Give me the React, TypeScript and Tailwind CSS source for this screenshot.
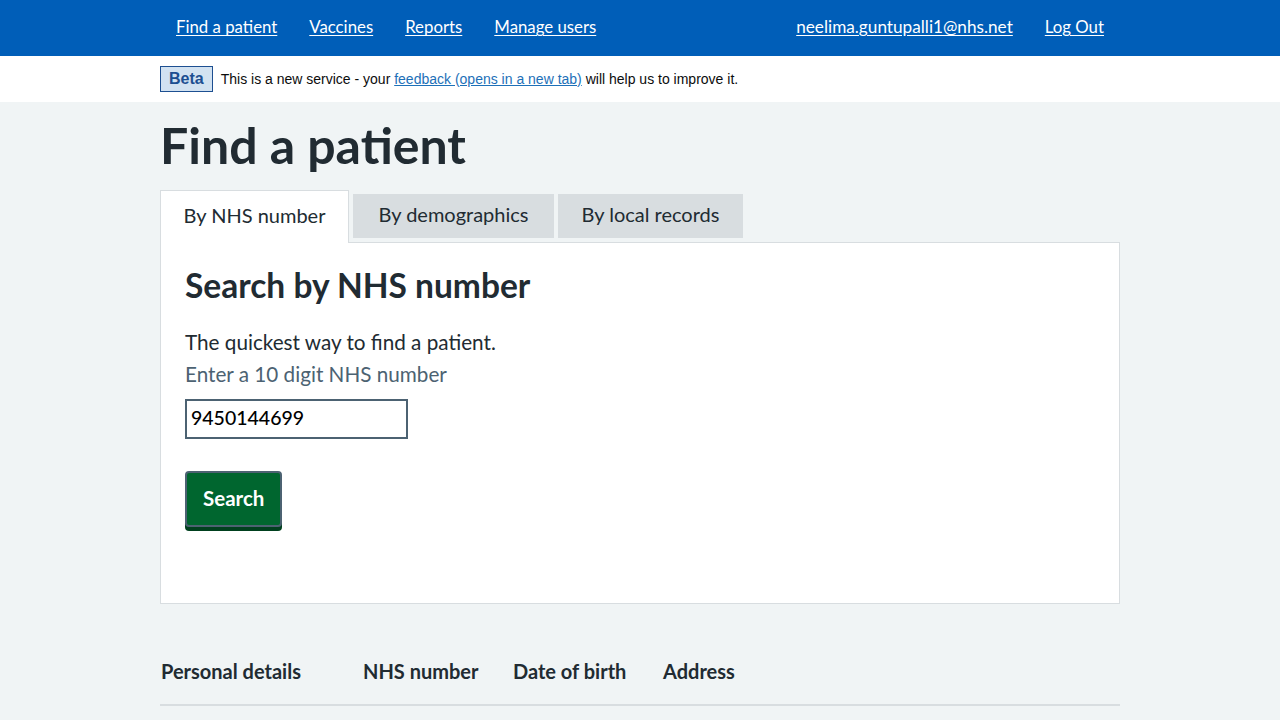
import { useState } from "react";

const NAV_LEFT = ["Find a patient", "Vaccines", "Reports", "Manage users"];

const TABS = [
  { label: "By NHS number", width: "w-[189px]" },
  { label: "By demographics", width: "w-[201px]" },
  { label: "By local records", width: "w-[185px]" },
];

export default function App() {
  const [tab, setTab] = useState(0);
  const [nhsNumber, setNhsNumber] = useState("9450144699");

  return (
    <div className="min-h-screen bg-[#f0f4f5] text-[#212b32] font-['Lato','Open_Sans',sans-serif]">
      {/* header */}
      <header className="bg-[#005eb8] text-white">
        <nav className="mx-auto flex h-14 w-[960px] items-center justify-between pb-[2px]">
          <ul className="flex">
            {NAV_LEFT.map((item) => (
              <li key={item}>
                <a href="#" className="block px-4 text-[16.8px] underline underline-offset-2">
                  {item}
                </a>
              </li>
            ))}
          </ul>
          <ul className="flex">
            <li>
              <a href="#" className="block px-4 text-[17.2px] underline underline-offset-2">
                neelima.guntupalli1@nhs.net
              </a>
            </li>
            <li>
              <a href="#" className="block px-4 text-[16.8px] underline underline-offset-2">
                Log Out
              </a>
            </li>
          </ul>
        </nav>
      </header>

      {/* beta banner */}
      <div className="bg-white">
        <div className="mx-auto flex h-[46px] w-[960px] items-center gap-2 font-['Liberation_Sans',Arial,sans-serif] text-[14px] text-[#0b0c0c]">
          <strong className="border border-[#1d4f91] bg-[#d2e2f1] px-2 py-[2px] text-[16px] leading-5 text-[#1d4f91]">
            Beta
          </strong>
          <span>
            This is a new service - your{" "}
            <a href="#" className="text-[#1d70b8] underline">
              feedback (opens in a new tab)
            </a>{" "}
            will help us to improve it.
          </span>
        </div>
      </div>

      <main className="mx-auto w-[960px]">
        <h1 className="mt-[13px] mb-[15px] text-[50px] font-bold leading-[60px]">Find a patient</h1>

        {/* tabs */}
        <div className="flex items-end gap-1">
          {TABS.map((t, i) =>
            i === tab ? (
              <button
                key={t.label}
                onClick={() => setTab(i)}
                className={`${t.width} relative -mb-px h-[53px] border border-b-0 border-[#d8dde0] bg-white pb-[5px] text-[20px]`}
              >
                {t.label}
              </button>
            ) : (
              <button
                key={t.label}
                onClick={() => setTab(i)}
                className={`${t.width} mb-[4px] h-[44px] bg-[#d8dde0] pb-[4px] text-[20px]`}
              >
                {t.label}
              </button>
            )
          )}
        </div>

        <section className="h-[362px] border border-[#d8dde0] bg-white px-6 pt-[22px]">
          <h2 className="text-[33.5px] font-bold leading-10">Search by NHS number</h2>
          <p className="mt-[23px] text-[20.7px] leading-7">The quickest way to find a patient.</p>
          <label className="mt-[4px] block text-[20.7px] leading-7 text-[#4c6272]">
            Enter a 10 digit NHS number
          </label>
          <input
            value={nhsNumber}
            onChange={(e) => setNhsNumber(e.target.value)}
            className="mt-[11px] block h-10 w-[223px] border-2 border-[#4c6272] px-1 pb-[3px] text-[19.5px] font-medium text-black outline-none"
          />
          <button className="mt-8 h-[56px] rounded border-2 border-[#4c6272] bg-[#00662f] px-4 pb-[2px] text-[20.5px] font-bold leading-6 text-white shadow-[0_4px_0_#00401e]">
            Search
          </button>
        </section>

        {/* results header */}
        <table className="mt-[42px] w-full">
          <thead>
            <tr className="border-b-2 border-[#d8dde0] text-left text-[20px]">
              <th className="w-[202px] pb-[18px] pl-px pt-[10px] font-bold">Personal details</th>
              <th className="w-[150px] pb-[18px] pl-px pt-[10px] font-bold">NHS number</th>
              <th className="w-[150px] pb-[18px] pl-px pt-[10px] font-bold">Date of birth</th>
              <th className="pb-[18px] pl-px pt-[10px] font-bold">Address</th>
            </tr>
          </thead>
        </table>
      </main>
    </div>
  );
}
